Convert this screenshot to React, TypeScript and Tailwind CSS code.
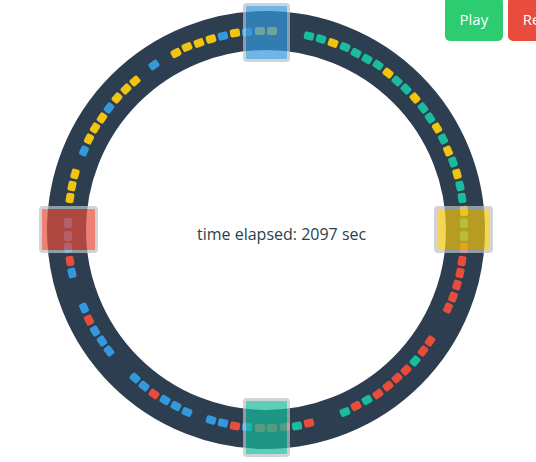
import React from "react";

// ring geometry (px, canvas coords)
const CX = 266;
const CY = 229.5;
const CAR_R = 198.5;
const STATION_R = 197.5;
const SLOTS = 100;

// one char per slot, clockwise from 12 o'clock; "-" is an empty slot
const TRACK =
  "Y--TTYTTTT" +
  "YTTYTTYTYT" +
  "YTTYTTRRRR" +
  "RR--RRTRRR" +
  "RTRT--RTRR" +
  "RBRBB-BBBR" +
  "BB--BBBRB-" +
  "-BRBBB-YYY" +
  "-BYYYBYYY-" +
  "B-YYYYBYBY";

const carColor: Record<string, string> = {
  Y: "bg-[#f1c40f]",
  T: "bg-[#1abc9c]",
  R: "bg-[#e74c3c]",
  B: "bg-[#3498db]",
};

const stations = [
  { angle: 0, color: "bg-[#3498db]" },
  { angle: 90, color: "bg-[#f1c40f]" },
  { angle: 180, color: "bg-[#1abc9c]" },
  { angle: 270, color: "bg-[#e74c3c]" },
];

function polar(angle: number, r: number) {
  const a = (angle * Math.PI) / 180;
  return { x: CX + r * Math.sin(a), y: CY - r * Math.cos(a) };
}

function Car({ slot, kind }: { slot: number; kind: string }) {
  const angle = (360 / SLOTS) * (slot + 0.5);
  const { x, y } = polar(angle, CAR_R);
  return (
    <div
      className={`absolute w-[10px] h-[8px] rounded-[2px] ${carColor[kind]}`}
      style={{ left: x - 5, top: y - 4, transform: `rotate(${angle}deg)` }}
    />
  );
}

function Station({ angle, color }: { angle: number; color: string }) {
  const { x, y } = polar(angle, STATION_R);
  return (
    <div
      className={`absolute w-[47px] h-[59px] box-border border-[3px] border-[#bdc3c7] rounded-[4px] opacity-70 ${color}`}
      style={{ left: x - 23.5, top: y - 29.5, transform: `rotate(${angle}deg)` }}
    />
  );
}

export default function App() {
  return (
    <div className="relative w-[536px] h-[462px] overflow-hidden bg-white font-['Open_Sans',sans-serif]">
      <div className="absolute left-[47px] top-[10.5px] w-[438px] h-[438px] rounded-full border-[39px] border-[#2c3e50]" />

      {TRACK.split("").map((k, i) =>
        k === "-" ? null : <Car key={i} slot={i} kind={k} />,
      )}

      {stations.map((s) => (
        <Station key={s.angle} angle={s.angle} color={s.color} />
      ))}

      <p className="absolute left-[197px] top-[223px] text-[16px] leading-[22px] text-[#2c3e50] whitespace-nowrap">
        time elapsed: 2097 sec
      </p>

      <div className="absolute -top-[3px] left-[445px] flex gap-[5px]">
        <button
          type="button"
          className="shrink-0 h-[44px] px-[14.5px] rounded-[5px] bg-[#2ecc71] text-white text-[15px] whitespace-nowrap"
        >
          Play
        </button>
        <button
          type="button"
          className="shrink-0 h-[44px] px-[15px] rounded-[5px] bg-[#e74c3c] text-white text-[15px] whitespace-nowrap"
        >
          Reset
        </button>
      </div>
    </div>
  );
}
